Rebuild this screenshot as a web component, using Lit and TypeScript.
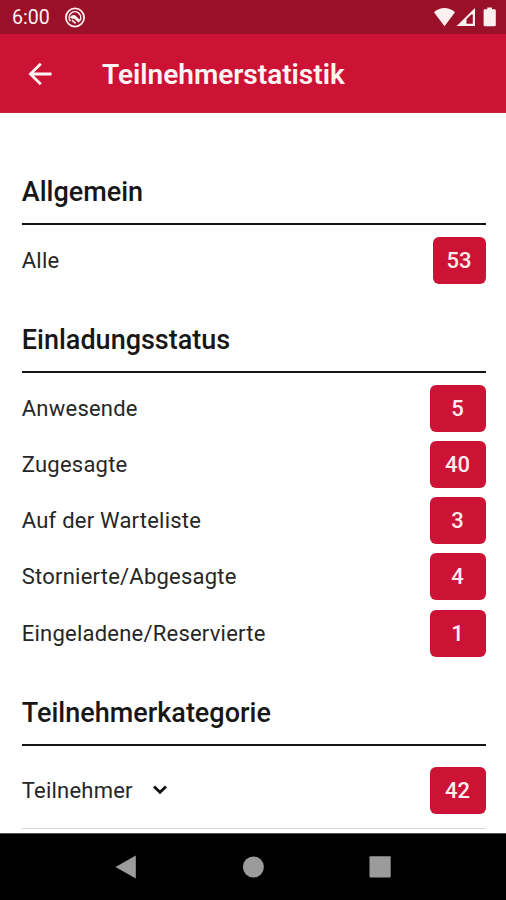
import { LitElement, html, css } from "lit";
import { customElement, property } from "lit/decorators.js";

interface Row {
  label: string;
  count: number;
  expandable?: boolean;
  compact?: boolean;
}

interface Section {
  title: string;
  rows: Row[];
}

const SECTIONS: Section[] = [
  { title: "Allgemein", rows: [{ label: "Alle", count: 53, compact: true }] },
  {
    title: "Einladungsstatus",
    rows: [
      { label: "Anwesende", count: 5 },
      { label: "Zugesagte", count: 40 },
      { label: "Auf der Warteliste", count: 3 },
      { label: "Stornierte/Abgesagte", count: 4 },
      { label: "Eingeladene/Reservierte", count: 1 },
    ],
  },
  {
    title: "Teilnehmerkategorie",
    rows: [{ label: "Teilnehmer", count: 42, expandable: true }],
  },
];

@customElement("status-bar")
export class StatusBar extends LitElement {
  static styles = css`
    :host {
      display: flex;
      align-items: center;
      height: 34px;
      padding: 0 9px 0 12px;
      box-sizing: border-box;
      background: #9a1029;
      color: #fff0f0;
    }
    .time {
      font-size: 19.6px;
      line-height: 34px;
      flex: 1;
      display: flex;
      align-items: center;
      gap: 14.5px;
      padding-top: 1px;
    }
    .icons {
      display: flex;
      align-items: center;
    }
    svg {
      display: block;
    }
  `;
  render() {
    return html`
      <div class="time">
        <span>6:00</span>
        <svg width="22" height="22" viewBox="0 0 22 22" fill="none" stroke="currentColor">
          <circle cx="11" cy="10.5" r="9.1" stroke-width="1.8" />
          <path d="M6.4 14.2A5.8 5.8 0 1 1 16 13.4" stroke-width="1.5" />
          <path d="M5.8 10.4Q7.6 7 11 8.2L16.6 13.6L14.6 15.8L10 11.4L8.4 12Z" fill="currentColor" stroke="none" />
          <path d="M8 13.2L11.6 16.4" stroke-width="1.6" />
        </svg>
      </div>
      <div class="icons">
        <svg width="64" height="34" viewBox="0 0 64 34" fill="currentColor">
          <path d="M1 12.2Q11.5 3.8 22 12.2L11.5 26.2Z" />
          <path fill-rule="evenodd" d="M42 8V26H23.7ZM38.2 14.6L33.5 19.2V23.8H39.8V14.6Z" />
          <path d="M54.3 9.2V7.6H58.9V9.2H61.5Q62.8 9.2 62.8 10.5V25Q62.8 26.3 61.5 26.3H51.9Q50.6 26.3 50.6 25V10.5Q50.6 9.2 51.9 9.2Z" />
        </svg>
      </div>
    `;
  }
}

@customElement("app-header")
export class AppHeader extends LitElement {
  static styles = css`
    :host {
      display: flex;
      align-items: center;
      height: 79px;
      padding: 0 26px;
      box-sizing: border-box;
      background: #cd1335;
      border-bottom: 1px solid #c5283a;
      color: #fff4f4;
    }
    .back {
      display: block;
      margin: 1px 48px 0 0;
    }
    .title {
      margin: 3px 0 0;
      font-size: 28px;
      font-weight: 600;
      line-height: 34px;
      letter-spacing: 0;
    }
  `;
  render() {
    return html`
      <svg class="back" width="28" height="28" viewBox="0 0 28 28" fill="none" stroke="currentColor" stroke-width="2.8">
        <path d="M25.5 14H4.5M14.8 3.7L4.4 14L14.8 24.3" />
      </svg>
      <h1 class="title">Teilnehmerstatistik</h1>
    `;
  }
}

@customElement("stat-section")
export class StatSection extends LitElement {
  @property({ attribute: false }) section!: Section;

  static styles = css`
    :host {
      display: block;
    }
    .heading {
      margin: 0;
      padding-bottom: 14px;
      border-bottom: 2px solid #151515;
      font-size: 27px;
      font-weight: 500;
      line-height: 34px;
      letter-spacing: 0;
      color: #171717;
    }
    .rows {
      display: grid;
      gap: 9.25px;
      padding-top: 11.8px;
    }
    .row {
      display: flex;
      align-items: center;
      height: 47px;
      font-size: 22px;
      letter-spacing: 0.22px;
      color: #262626;
    }
    .row.expandable {
      padding: 9.4px 0 14px;
      border-bottom: 1px solid #d6d6d6;
    }
    .chevron {
      margin-left: 19px;
    }
    .badge {
      display: flex;
      align-items: center;
      justify-content: center;
      width: 56px;
      height: 47px;
      margin-left: auto;
      border-radius: 6px;
      background: #cd1335;
      color: #ffeded;
      font-weight: 500;
      letter-spacing: 0;
    }
    .badge.compact {
      width: 53px;
    }
  `;
  render() {
    return html`
      <h2 class="heading">${this.section.title}</h2>
      <div class="rows">
        ${this.section.rows.map(
          (r) => html`
            <div class="row ${r.expandable ? "expandable" : ""}">
              <span>${r.label}</span>
              ${r.expandable
                ? html`<svg class="chevron" width="16" height="12" viewBox="0 0 16 12" fill="none" stroke="#111" stroke-width="2.8">
                    <path d="M2 2.4L8 8.2L14 2.4" />
                  </svg>`
                : null}
              <span class="badge ${r.compact ? "compact" : ""}">${r.count}</span>
            </div>
          `
        )}
      </div>
    `;
  }
}

@customElement("nav-bar")
export class NavBar extends LitElement {
  static styles = css`
    :host {
      display: flex;
      align-items: center;
      justify-content: center;
      height: 67px;
      box-sizing: border-box;
      background: #000;
      border-top: 1px solid #555;
    }
    .keys {
      display: flex;
      justify-content: space-between;
      width: 276px;
      color: #9b9b9b;
      margin-bottom: 1px;
    }
    svg {
      display: block;
    }
  `;
  render() {
    return html`
      <div class="keys">
        <svg width="22" height="24" viewBox="0 0 22 24" fill="currentColor"><path d="M0.5 12L20.8 0.5V23.5Z" /></svg>
        <svg width="22" height="24" viewBox="0 0 22 24" fill="currentColor"><circle cx="11.4" cy="12" r="10.5" /></svg>
        <svg width="22" height="24" viewBox="0 0 22 24" fill="currentColor"><rect x="0.5" y="1.3" width="21.2" height="21.2" rx="1" /></svg>
      </div>
    `;
  }
}

@customElement("app-root")
export class AppRoot extends LitElement {
  static styles = css`
    :host {
      display: flex;
      flex-direction: column;
      height: 900px;
      overflow: hidden;
      background: #fff;
      font-family: Roboto, "Liberation Sans", sans-serif;
    }
    .content {
      flex: 1;
      min-height: 0;
      overflow: hidden;
      display: flex;
      flex-direction: column;
      gap: 39px;
      padding: 62px 20.4px 0 21.8px;
    }
  `;
  render() {
    return html`
      <status-bar></status-bar>
      <app-header></app-header>
      <main class="content">
        ${SECTIONS.map((s) => html`<stat-section .section=${s}></stat-section>`)}
      </main>
      <nav-bar></nav-bar>
    `;
  }
}
